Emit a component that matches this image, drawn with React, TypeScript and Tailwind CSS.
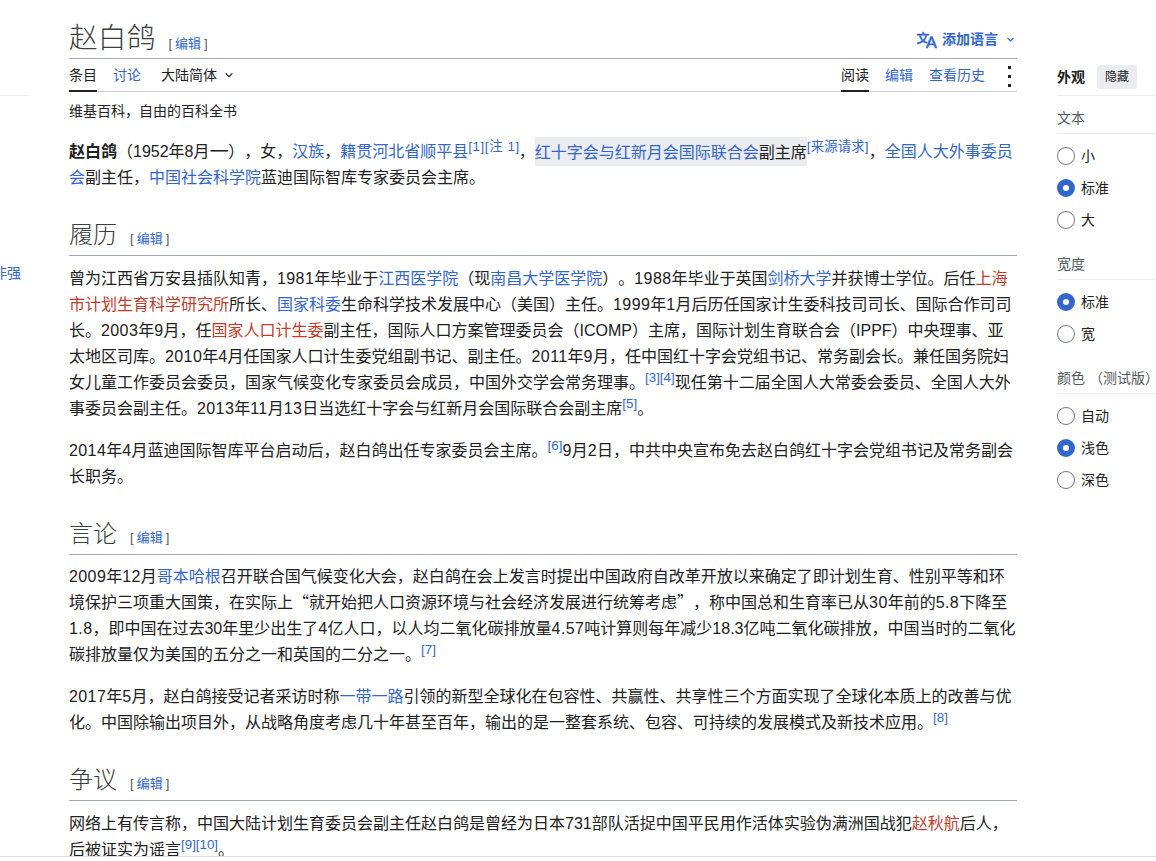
const F = "font-['Liberation_Sans','Noto_Sans_CJK_SC',sans-serif]";
const H = "font-['Liberation_Serif','Noto_Sans_CJK_SC',serif]";

function A({ children }: { children: React.ReactNode }) {
  return <a className="text-[#3366cc]">{children}</a>;
}
function R({ children }: { children: React.ReactNode }) {
  return <a className="text-[#bf3c2c]">{children}</a>;
}
function C({ children }: { children: React.ReactNode }) {
  return <span className="font-['Noto_Sans_CJK_SC',sans-serif] leading-[0]">{children}</span>;
}
function D({ children }: { children: React.ReactNode }) {
  return <span className="tracking-[0.4px]">{children}</span>;
}
function S({ children, className = "" }: { children: React.ReactNode; className?: string }) {
  return <sup className={`text-[#3366cc] text-[13.33px] leading-[0] align-[6px] top-0 ${className}`}>{children}</sup>;
}
function Edit() {
  return (
    <span className={`text-[13px] text-[#54595d] ml-[13px] font-normal ${F}`}>
      <span className="mr-[3px]">[</span><a className="text-[#3366cc]">编辑</a><span className="ml-[3px]">]</span>
    </span>
  );
}
function Heading({ children, tight }: { children: React.ReactNode; tight?: boolean }) {
  return (
    <h2 className={`flex items-baseline text-[24px] leading-[30px] font-light text-[#3c3e40] border-b border-[#a2a9b1] mt-[29px] pb-[1px] ${tight ? "mb-[9px]" : "mb-[10px]"} ${H}`}>
      {children}<Edit />
    </h2>
  );
}
function Radio({ on, label }: { on?: boolean; label: string }) {
  return (
    <div className="flex items-center h-[18px] mb-[14px] gap-[6px]">
      <span className={on ? "w-[18px] h-[18px] rounded-full border-[6px] border-[#3366cc] bg-white" : "w-[18px] h-[18px] rounded-full border border-[#72777d] bg-white"} />
      <span className="text-[14px] text-[#202122]">{label}</span>
    </div>
  );
}
function Group({ title, children }: { title: string; children: React.ReactNode }) {
  return (
    <div className="mb-[25px]">
      <div className="text-[14px] leading-[20px] whitespace-nowrap text-[#54595d] border-b border-[#eaecf0] pb-[5px] mb-[13px]">{title}</div>
      {children}
    </div>
  );
}

export default function App() {
  return (
    <div className={`flex w-[1156px] h-[857px] overflow-hidden bg-white text-[#202122] border-b border-b-[#dcdcdc] [text-spacing-trim:space-all] ${F}`}>
      <aside className="w-[69px] shrink-0">
        <div className="w-[29px] h-[96px] border-b border-[#eaecf0]" />
        <div className="w-[21px] mt-[167px] overflow-hidden flex justify-end whitespace-nowrap text-[14px] leading-[20px] text-[#3366cc]">非强</div>
      </aside>

      <main className="w-[948px] shrink-0">
        <div className="flex items-end justify-between h-[59px] border-b border-[#a2a9b1]">
          <h1 className={`flex items-baseline text-[28.8px] leading-[40px] font-light text-[#3c3e40] mb-[-6px] ${H}`}>
            赵白鸽<Edit />
          </h1>
          <div className="flex items-center text-[14px] font-bold text-[#3366cc] mb-[8px]">
            <svg viewBox="0 0 20 20" className="w-[20px] h-[20px] mr-[5px]" fill="#3366cc" stroke="#3366cc" strokeWidth="0.5">
              <path d="M20 18h-1.44a.6.6 0 0 1-.4-.12.8.8 0 0 1-.23-.31L17 15h-5l-1 2.54a.8.8 0 0 1-.22.3.6.6 0 0 1-.4.14H9l4.55-11.47h1.89zm-3.53-4.31L14.89 9.5a12 12 0 0 1-.39-1.24q-.09.37-.19.69l-.19.56-1.58 4.19zm-6.3-1.58a13.4 13.4 0 0 1-2.91-1.41 11.46 11.46 0 0 0 2.81-5.37H12V4H7.31a4 4 0 0 0-.2-.56C6.87 2.79 6.6 2 6.6 2l-1.47.5s.4.89.6 1.5H0v1.33h2.15A11.23 11.23 0 0 0 5 10.7a17.2 17.2 0 0 1-5 2.1q.56.82.87 1.38a23.3 23.3 0 0 0 5.22-2.51 15.6 15.6 0 0 0 3.56 1.77zM3.63 5.33h4.91a8.1 8.1 0 0 1-2.45 4.45 9.1 9.1 0 0 1-2.46-4.45" />
            </svg>
            添加语言
            <svg viewBox="0 0 12 12" className="w-[9px] h-[9px] ml-[8px] mr-[2px]" fill="none" stroke="#3366cc" strokeWidth="1.5">
              <path d="M2 4l4 4 4-4" />
            </svg>
          </div>
        </div>

        <div className="flex items-stretch justify-between h-[33px] border-b border-[#c8ccd1] text-[14px]">
          <div className="flex gap-[16px]">
            <span className="border-b-2 border-[#202122] h-[33px] pt-[6px] leading-[20px] w-[28px]">条目</span>
            <a className="text-[#3366cc] pt-[6px] leading-[20px]">讨论</a>
            <span className="ml-[4px] pt-[6px] leading-[20px] flex items-start">
              大陆简体
              <svg viewBox="0 0 12 12" className="w-[10px] h-[10px] ml-[7px] mt-[5px]" fill="none" stroke="#202122" strokeWidth="1.5">
                <path d="M2 4l4 4 4-4" />
              </svg>
            </span>
          </div>
          <div className="flex gap-[16px] items-start">
            <span className="border-b-2 border-[#202122] h-[33px] pt-[6px] leading-[20px] w-[28px]">阅读</span>
            <a className="text-[#3366cc] pt-[6px] leading-[20px]">编辑</a>
            <a className="text-[#3366cc] pt-[6px] leading-[20px]">查看历史</a>
            <span className="flex flex-col gap-[6px] items-center w-[16px] pt-[7px]">
              <i className="w-[3px] h-[3px] bg-[#202122]" />
              <i className="w-[3px] h-[3px] bg-[#202122]" />
              <i className="w-[3px] h-[3px] bg-[#202122]" />
            </span>
          </div>
        </div>

        <div className="text-[14px] leading-[20px] mt-[9px] mb-[18px]">维基百科，自由的百科全书</div>

        <div className="text-[16px] leading-[26px]">
          <p>
            <b>赵白鸽</b>（1952年8月<span className="font-['Noto_Sans_CJK_SC',sans-serif] text-[22px] leading-[0] tracking-[-1px]">—</span>），女，<A>汉族</A>，<A>籍贯河北省顺平县</A><S className="tracking-[0.6px] mr-[-1px]">[1][注 1]</S>，
            <span className="bg-[#eaecf0] pt-[6.5px] pb-[5.5px]"><A>红十字会与红新月会国际联合会</A>副主席</span>
            <S className="tracking-[0.2px]">[来源请求]</S>，<A>全国人大外事委员会</A>副主任，<A>中国社会科学院</A>蓝迪国际智库专家委员会主席。
          </p>

          <Heading>履历</Heading>
          <p className="mb-[16px]">
            曾为江西省万安县插队知青，<D>1981</D>年毕业于<A>江西医学院</A>（现<A>南昌大学医学院</A>）。<D>1988</D>年毕业于英国<A>剑桥大学</A>并获博士学位。后任<R>上海市计划生育科学研究所</R>所长、<A>国家科委</A>生命科学技术发展中心（美国）主任。<D>1999</D>年<D>1</D>月后历任国家计生委科技司司长、国际合作司司长。<D>2003</D>年<D>9</D>月，任<R>国家人口计生委</R>副主任，国际人口方案管理委员会（ICOMP）主席，国际计划生育联合会（IPPF）中央理事、亚太地区司库。<D>2010</D>年<D>4</D>月任国家人口计生委党组副书记、副主任。<D>2011</D>年<D>9</D>月，任中国红十字会党组书记、常务副会长。兼任国务院妇女儿童工作委员会委员，国家气候变化专家委员会成员，中国外交学会常务理事。<S>[3][4]</S>现任第十二届全国人大常委会委员、全国人大外事委员会副主任。<D>2013</D>年<D>11</D>月<D>13</D>日当选红十字会与红新月会国际联合会副主席<S>[5]</S>。
          </p>
          <p>
            <D>2014</D>年<D>4</D>月蓝迪国际智库平台启动后，赵白鸽出任专家委员会主席。<S>[6]</S><D>9</D>月<D>2</D>日，中共中央宣布免去赵白鸽红十字会党组书记及常务副会长职务。
          </p>

          <Heading tight>言论</Heading>
          <p className="mb-[16px]">
            <D>2009</D>年<D>12</D>月<A>哥本哈根</A>召开联合国气候变化大会，赵白鸽在会上发言时提出中国政府自改革开放以来确定了即计划生育、性别平等和环境保护三项重大国策，在实际上<C>“</C>就开始把人口资源环境与社会经济发展进行统筹考虑<C>”</C>，称中国总和生育率已从<D>30</D>年前的<D>5.8</D>下降至<D>1.8</D>，即中国在过去30年里少出生了<D>4</D>亿人口，以人均二氧化碳排放量<D>4.57</D>吨计算则每年减少18.3亿吨二氧化碳排放，中国当时的二氧化碳排放量仅为美国的五分之一和英国的二分之一。<S>[7]</S>
          </p>
          <p>
            <D>2017</D>年<D>5</D>月，赵白鸽接受记者采访时称<A>一带一路</A>引领的新型全球化在包容性、共赢性、共享性三个方面实现了全球化本质上的改善与优化。中国除输出项目外，从战略角度考虑几十年甚至百年，输出的是一整套系统、包容、可持续的发展模式及新技术应用。<S>[8]</S>
          </p>

          <Heading>争议</Heading>
          <p>
            网络上有传言称，中国大陆计划生育委员会副主任赵白鸽是曾经为日本731部队活捉中国平民用作活体实验伪满洲国战犯<R>赵秋航</R>后人，后被证实为谣言<S>[9][10]</S>。
          </p>
        </div>
      </main>

      <aside className="w-[99px] ml-[40px] shrink-0">
        <div className="flex items-center pt-[65px] pb-[6px] border-b border-[#eaecf0] gap-[12px]">
          <span className="text-[14px] font-bold">外观</span>
          <span className="w-[40px] h-[24px] rounded-[2px] bg-[#eaecf0] text-[12px] flex items-center justify-center">隐藏</span>
        </div>
        <div className="mt-[12px]">
          <Group title="文本">
            <Radio label="小" /><Radio on label="标准" /><Radio label="大" />
          </Group>
          <Group title="宽度">
            <Radio on label="标准" /><Radio label="宽" />
          </Group>
          <Group title="颜色 （测试版）">
            <Radio label="自动" /><Radio on label="浅色" /><Radio label="深色" />
          </Group>
        </div>
      </aside>
    </div>
  );
}
